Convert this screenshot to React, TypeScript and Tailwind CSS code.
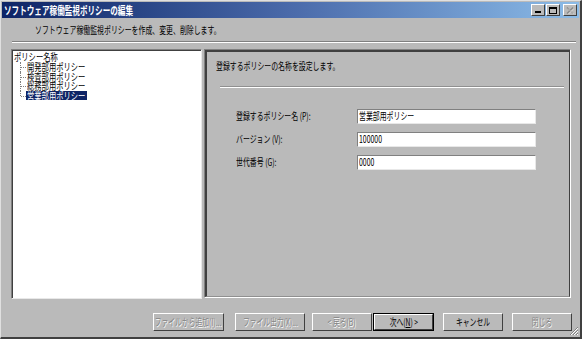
import React from "react"

const font = { fontFamily: '"MS UI Gothic", "Noto Sans CJK JP", sans-serif' }

function T({ children, className = "" }: { children: React.ReactNode; className?: string }) {
  return <span className={`inline-block whitespace-nowrap origin-left scale-x-[0.69] ${className}`}>{children}</span>
}

function Btn({ label, disabled, primary, w = "w-[60px]" }: { label: React.ReactNode; disabled?: boolean; primary?: boolean; w?: string }) {
  return (
    <div className={`${w} h-[18px] ${primary ? "border border-black" : ""}`}>
      <div className="h-full w-full border-t border-l border-white border-r border-b border-r-[#404040] border-b-[#404040] bg-[#bababa] flex items-center justify-center">
        <span
          className={`inline-block scale-x-[0.68] text-[10px] leading-none whitespace-nowrap ${disabled ? "text-[#858585]" : "text-black"}`}
          style={disabled ? { textShadow: "1px 1px 0 #ffffff" } : undefined}
        >
          {label}
        </span>
      </div>
    </div>
  )
}

function Field({ label, value }: { label: string; value: string }) {
  return (
    <div className="flex items-center h-[14px]">
      <div className="w-[121px] text-[10px] leading-none text-black">
        <T>{label}</T>
      </div>
      <div className="w-[179px] h-[15px] bg-white border-t border-l border-[#808080] border-r border-b border-r-[#e8e8e8] border-b-[#e8e8e8] flex items-center pl-[1px]">
        <T className="text-[10px] leading-none text-black">{value}</T>
      </div>
    </div>
  )
}

export default function App() {
  const children = ["開発部用ポリシー", "検査部用ポリシー", "総務部用ポリシー", "営業部用ポリシー"]
  return (
    <div className="w-[582px] h-[339px] bg-[#bababa] relative overflow-hidden" style={font}>
      <div className="h-full w-full border-t border-l border-[#e0e0e0] border-r-2 border-b-2 border-r-[#404040] border-b-[#404040] flex flex-col">
        {/* title bar */}
        <div className="mx-[1px] mt-[1px] h-[16px] bg-gradient-to-r from-[#0e2466] via-[#4a6aaa] to-[#8cbce8] flex items-center justify-between pl-[2px] pr-[2px]">
          <T className="text-white text-[11px] font-bold leading-none scale-x-[0.68]">ソフトウェア稼働監視ポリシーの編集</T>
          <div className="flex items-center gap-[1px]">
            <div className="w-[14px] h-[12px] bg-[#bababa] border-t border-l border-white border-r border-b border-r-[#404040] border-b-[#404040] flex items-end justify-center pb-[2px]">
              <div className="w-[6px] h-[2px] bg-black" />
            </div>
            <div className="w-[14px] h-[12px] bg-[#bababa] border-t border-l border-white border-r border-b border-r-[#404040] border-b-[#404040] flex items-center justify-center">
              <div className="w-[8px] h-[7px] border border-black border-t-2" />
            </div>
            <div className="w-[14px] h-[12px] ml-[2px] bg-[#bababa] border-t border-l border-white border-r border-b border-r-[#404040] border-b-[#404040] flex items-center justify-center">
              <svg width="8" height="7" viewBox="0 0 8 7">
                <path d="M1 0.5 L7 6.5 M7 0.5 L1 6.5" stroke="#8a8a8a" strokeWidth="1.4" />
                <path d="M2 1.5 L8 7.5 M8 1.5 L2 7.5" stroke="#ffffff" strokeWidth="0.8" opacity="0.6" />
              </svg>
            </div>
          </div>
        </div>

        {/* description */}
        <div className="h-[23px] flex items-center pl-[34px]">
          <T className="text-[10px] leading-none text-black">ソフトウェア稼働監視ポリシーを作成、変更、削除します。</T>
        </div>
        <div className="ml-[11px] mr-[4px] h-[2px] border-t border-[#808080] border-b border-b-white" />

        {/* main */}
        <div className="flex mt-[6px] ml-[10px] gap-[2px]">
          <div className="w-[191px] h-[250px] bg-white border-t border-l border-[#808080] border-r border-b border-r-[#e8e8e8] border-b-[#e8e8e8]">
            <div className="border-t border-l border-[#404040] h-full pt-[1px] pl-[1px]">
              <div className="h-[10px] text-[10px] leading-[10px] text-black">
                <T className="scale-x-[0.73]">ポリシー名称</T>
              </div>
              {children.map((c, i) => (
                <div key={c} className="flex items-center h-[9.5px]">
                  <div className="w-[12px] h-[9.5px] relative shrink-0">
                    <div className={`absolute left-[6px] top-0 w-0 border-l border-dotted border-[#808080] ${i === children.length - 1 ? "h-[5px]" : "h-[10px]"}`} />
                    <div className="absolute left-[7px] top-[5px] w-[5px] border-t border-dotted border-[#808080]" />
                  </div>
                  <div className={`w-[61px] h-[9.5px] flex items-center ${i === children.length - 1 ? "bg-[#0e2466] text-white" : "text-black"}`}>
                    <T className="ml-[1px] text-[10px] leading-[9px] h-[9px] scale-x-[0.73]">{c}</T>
                  </div>
                </div>
              ))}
            </div>
          </div>

          <div className="w-[367px] h-[249px] border-t border-l border-[#808080] border-r border-b border-r-white border-b-white">
            <div className="h-full border-t-2 border-l-2 border-[#404040] border-r border-b border-r-[#404040] border-b-[#909090]">
              <div className="h-[25px] flex items-center pl-[9px] pt-[2px]">
                <T className="text-[10px] leading-none text-black">登録するポリシーの名称を設定します。</T>
              </div>
              <div className="ml-[13px] mr-[5px] mt-[9px] h-[2px] border-t border-[#909090] border-b border-b-white" />
              <div className="flex flex-col gap-[9px] pl-[29px] mt-[21px]">
                <Field label="登録するポリシー名 (P):" value="営業部用ポリシー" />
                <Field label="バージョン (V):" value="100000" />
                <Field label="世代番号 (G):" value="0000" />
              </div>
            </div>
          </div>
        </div>

        {/* buttons */}
        <div className="flex items-center mt-[14px] pl-[152px]">
          <Btn label="ファイルから追加(I)..." disabled w="w-[71px]" />
          <div className="w-[11px]" />
          <Btn label="ファイル出力(X)..." disabled w="w-[70px]" />
          <div className="w-[7px]" />
          <Btn label="< 戻る(B)" disabled />
          <div className="w-[1px]" />
          <Btn label={<span>次へ(<u>N</u>) &gt;</span>} primary w="w-[61px]" />
          <div className="w-[9px]" />
          <Btn label="キャンセル" />
          <div className="w-[9px]" />
          <Btn label="閉じる" disabled />
        </div>
      </div>
      <svg className="absolute right-[3px] bottom-[3px]" width="11" height="11" viewBox="0 0 11 11">
        <path d="M10 2 L2 10 M10 5 L5 10 M10 8 L8 10" stroke="#808080" strokeWidth="1" />
        <path d="M10 3 L3 10 M10 6 L6 10 M10 9 L9 10" stroke="#ffffff" strokeWidth="1" />
      </svg>
    </div>
  )
}
